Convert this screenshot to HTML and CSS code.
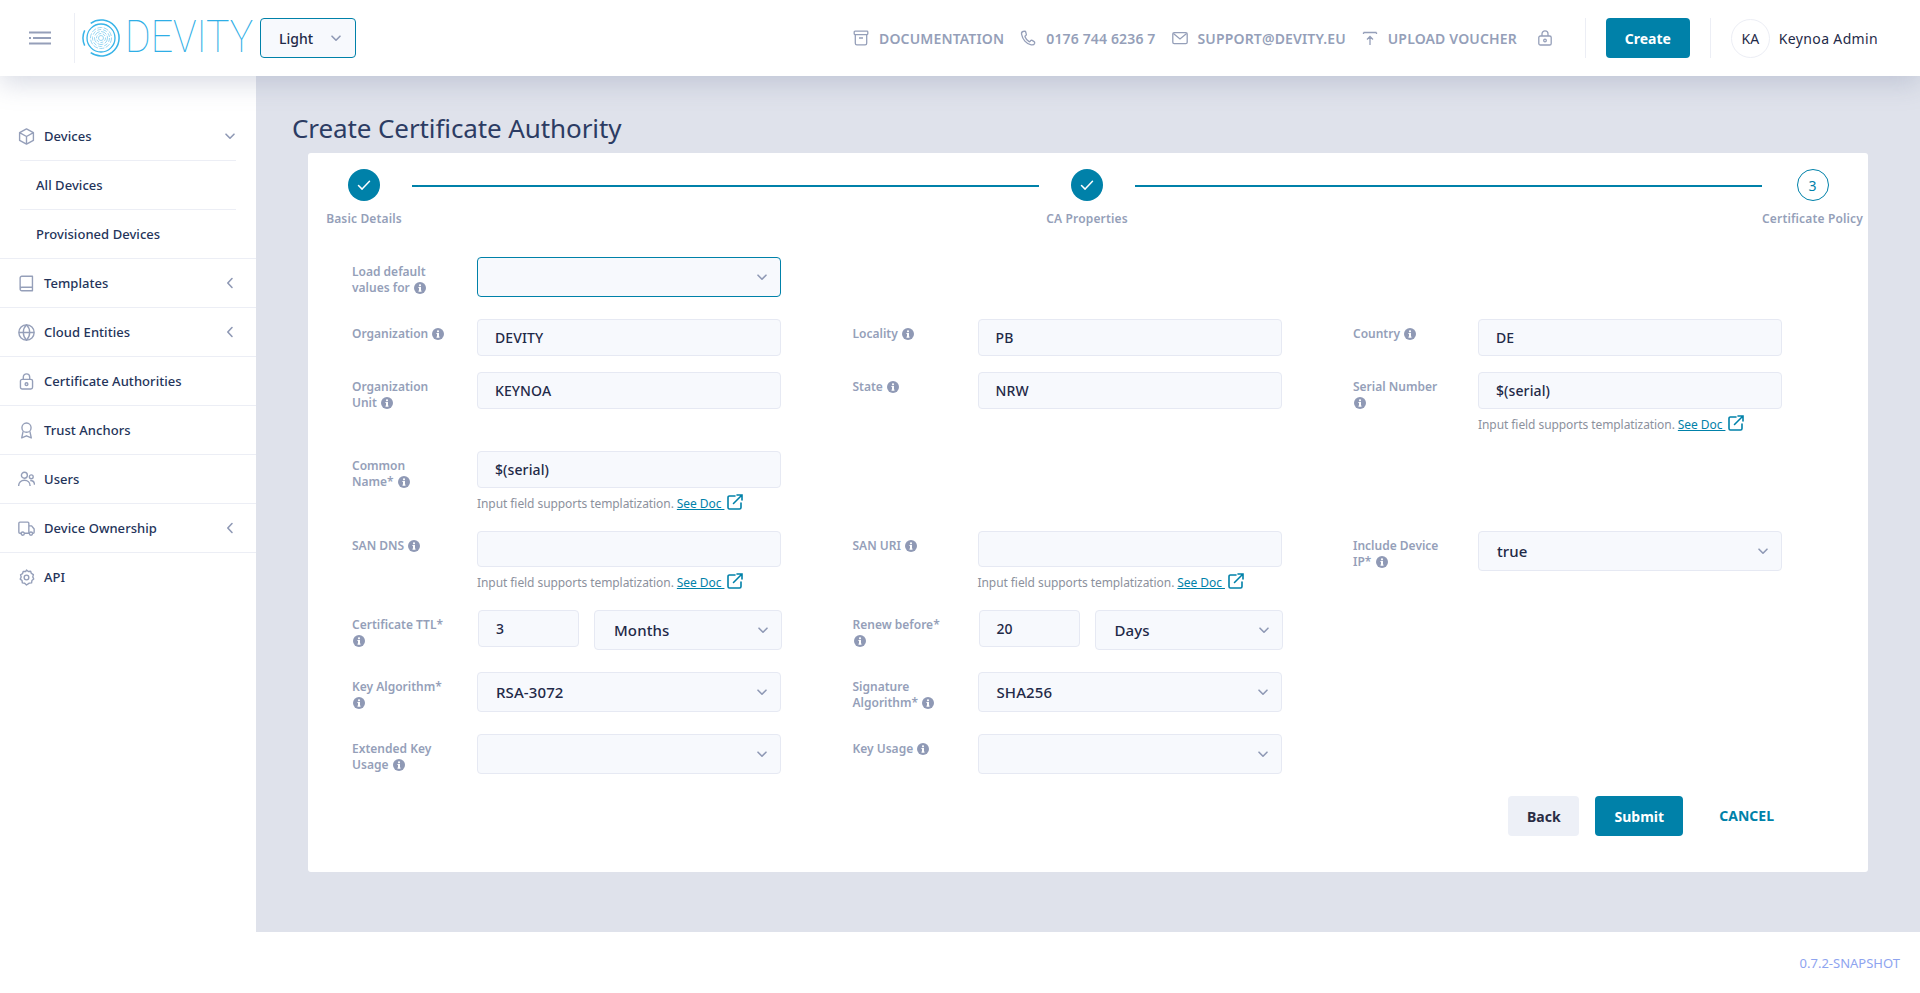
FILE: index.html
```html
<!DOCTYPE html>
<html lang="en">
<head>
<meta charset="utf-8">
<title>Create Certificate Authority</title>
<link rel="stylesheet" href="styles.css">
</head>
<body>
<svg class="defs" aria-hidden="true">
  <symbol id="i-info" viewBox="0 0 12 12"><circle cx="6" cy="6" r="6" fill="#8f99b5"/><rect x="5" y="5" width="2" height="4.4" fill="#fff"/><rect x="4.4" y="5" width="2" height="1" fill="#fff"/><rect x="4.4" y="8.6" width="3.2" height="1" fill="#fff"/><circle cx="6" cy="3.3" r="1.1" fill="#fff"/></symbol>
  <symbol id="i-chev" viewBox="0 0 12 12"><path d="M2 4.200l4 4 4-4" fill="none" stroke="#8f99b5" stroke-width="1.600" stroke-linecap="round" stroke-linejoin="round"/></symbol>
  <symbol id="i-left" viewBox="0 0 12 12"><path d="M8 1.500L3.800 6 8 10.500" fill="none" stroke="#8f99b5" stroke-width="1.600" stroke-linecap="round" stroke-linejoin="round"/></symbol>
  <symbol id="i-check" viewBox="0 0 16 16"><path d="M2.500 8.500l3.600 3.600 7.400-7.800" fill="none" stroke="#fff" stroke-width="1.500" stroke-linecap="round" stroke-linejoin="round"/></symbol>
  <symbol id="i-ext" viewBox="0 0 16 16"><path d="M8 2H2.400C1.600 2 1 2.600 1 3.400v10.200c0 .8.600 1.400 1.400 1.400h10.200c.8 0 1.400-.6 1.400-1.400V9" fill="none" stroke="#0081a9" stroke-width="1.600" stroke-linecap="round"/><path d="M6.500 9.500L14.500 1.500M10 1h5v5" fill="none" stroke="#0081a9" stroke-width="1.600" stroke-linecap="round"/></symbol>
</svg>

<header class="topbar">
  <svg class="burger" viewBox="0 0 22 14"><path d="M0 1.500h22M4 7h18M0 12.500h22M0 7h2" fill="none" stroke="#959fb9" stroke-width="2"/></svg>
  <span class="vrule vrule-logo"></span>
  <div class="logo">
    <svg class="logo-mark" viewBox="0 0 38 38" fill="none" stroke="#38b4e8">
      <path d="M8.700 4.300A18 18 0 1 1 8.700 33.700" stroke-width="1.500"/>
      <path d="M2.700 11.400A18 18 0 0 0 2.700 26.600" stroke-width="1.500"/>
      <circle cx="19" cy="19" r="14" stroke-width="1.300"/>
      <g stroke-width=".9" stroke="#8fd3f0">
        <circle cx="19" cy="19" r="10.500" stroke-dasharray="5 1.500"/>
        <circle cx="19" cy="19" r="8.500" stroke-dasharray="4 2"/>
        <circle cx="19" cy="19" r="6.500" stroke-dasharray="6 1.500"/>
        <circle cx="19" cy="19" r="4.500" stroke-dasharray="3 1.500"/>
        <circle cx="19" cy="19" r="2.500"/>
      </g>
    </svg>
    <span class="logo-text">DEVITY</span>
  </div>
  <div class="theme-select"><span>Light</span><svg class="chev"><use href="#i-chev"/></svg></div>

  <nav class="toplinks">
    <a class="toplink"><svg class="ticon" viewBox="0 0 16 16" fill="none"><rect x="1.200" y="1.200" width="13.600" height="3.400" rx=".8"/><path d="M2.300 4.600v8.600c0 .9.700 1.600 1.600 1.600h8.200c.9 0 1.600-.7 1.600-1.600V4.600M6 8h4"/></svg>DOCUMENTATION</a>
    <a class="toplink"><svg class="ticon" viewBox="0 0 16 16" fill="none"><path d="M5 1.200L3 1.500C1.800 1.800 1.300 3 1.600 4.400c.9 4.800 4.600 9.600 9.600 10.400 1.300.2 2.900-.2 3.400-1.400.3-.8.1-1.400-.5-1.800l-1.900-1.200c-.6-.3-1.200-.2-1.600.3l-.6.8c-.3.3-.6.3-.9.2C7 10.600 5.700 8.600 5 6.800c-.1-.4 0-.7.3-.9l.7-.6c.4-.3.500-.8.300-1.300L5.600 1.800C5.500 1.400 5.300 1.200 5 1.200z"/></svg>0176 744 6236 7</a>
    <a class="toplink"><svg class="ticon" viewBox="0 0 16 16" fill="none"><rect x=".8" y="2.600" width="14.400" height="11" rx="1.400"/><path d="M1.400 3.600L8 9l6.600-5.400"/></svg>SUPPORT@DEVITY.EU</a>
    <a class="toplink"><svg class="ticon" viewBox="0 0 16 16" fill="none"><path d="M1.500 2.500h13M1.500 2.500v1.500M14.500 2.500v1.500M8 6.500v8.500M5 9.500l3-3 3 3"/></svg>UPLOAD VOUCHER</a>
    <svg class="ticon ticon-lock" viewBox="0 0 16 16" fill="none"><rect x="1.800" y="6" width="12.400" height="9" rx="1.600"/><path d="M5 6V3.800a3 3 0 0 1 6 0V6"/><circle cx="8" cy="10.500" r="1.300"/></svg>
  </nav>
  <span class="vrule vrule-a"></span>
  <button class="btn btn-primary btn-create">Create</button>
  <span class="vrule vrule-b"></span>
  <div class="avatar">KA</div>
  <span class="username">Keynoa Admin</span>
</header>

<div class="body-row">
  <aside class="sidebar">
    <div class="nav-item nav-item-inset"><svg class="nav-icon" viewBox="0 0 16 16" fill="none"><path d="M8 .8l6.500 3.500v7.400L8 15.200 1.500 11.700V4.300zM1.500 4.300L8 8l6.500-3.700M8 8v7.200"/></svg><span>Devices</span><svg class="nav-chev"><use href="#i-chev"/></svg></div>
    <div class="nav-item nav-sub nav-item-inset"><span>All Devices</span></div>
    <div class="nav-item nav-sub"><span>Provisioned Devices</span></div>
    <div class="nav-item"><svg class="nav-icon" viewBox="0 0 16 16" fill="none"><path d="M2 13V2.800C2 1.800 2.800 1.200 3.600 1.200h10v13.600H3.600C2.700 14.800 2 14.100 2 13.200s.7-1.700 1.600-1.700h10"/></svg><span>Templates</span><svg class="nav-chev"><use href="#i-left"/></svg></div>
    <div class="nav-item"><svg class="nav-icon" viewBox="0 0 16 16" fill="none"><circle cx="8" cy="8" r="7.200"/><path d="M.8 8h14.400M8 .8c2 2 3 4.500 3 7.200s-1 5.200-3 7.200c-2-2-3-4.500-3-7.200S6 2.800 8 .8z"/></svg><span>Cloud Entities</span><svg class="nav-chev"><use href="#i-left"/></svg></div>
    <div class="nav-item"><svg class="nav-icon" viewBox="0 0 16 16" fill="none"><rect x="2.300" y="6" width="11.400" height="9" rx="1.600"/><path d="M5 6V3.800a3 3 0 0 1 6 0V6"/><circle cx="8" cy="10.500" r="1.300"/></svg><span>Certificate Authorities</span></div>
    <div class="nav-item"><svg class="nav-icon" viewBox="0 0 16 16" fill="none"><circle cx="8" cy="5.300" r="4.300"/><path d="M4.800 8.800L3.500 15 8 13l4.500 2-1.300-6.200"/></svg><span>Trust Anchors</span></div>
    <div class="nav-item"><svg class="nav-icon" viewBox="0 0 16 16" fill="none"><circle cx="6" cy="4" r="2.800"/><circle cx="12.500" cy="5.500" r="1.800"/><path d="M.6 14c0-3.300 2.400-5.300 5.400-5.300s5.400 2 5.400 5.300M11.500 9c2.200 0 4 1.500 4 4"/></svg><span>Users</span></div>
    <div class="nav-item"><svg class="nav-icon" viewBox="0 0 16 16" fill="none"><path d="M3 12.500H1.800c-.6 0-1-.4-1-1V3c0-.6.4-1 1-1h7.400c.6 0 1 .4 1 1v9.500H6M10.200 5.500h2.600l2.400 3v3c0 .6-.4 1-1 1h-.7M10.200 12.500h.6"/><circle cx="4.500" cy="12.800" r="1.500"/><circle cx="12.200" cy="12.800" r="1.500"/></svg><span>Device Ownership</span><svg class="nav-chev"><use href="#i-left"/></svg></div>
    <div class="nav-item nav-last"><svg class="nav-icon" viewBox="0 0 16 16" fill="none"><path d="M8 .9l1.700 1.400 2.200-.2.700 2.100 1.900 1.100-.6 2.100.9 2-1.700 1.400-.3 2.200-2.200.3L8 15.100l-1.700-1.700-2.200-.3-.3-2.200L2.100 9.500l.9-2-.6-2.100 1.900-1.100.7-2.100 2.200.2z"/><circle cx="8" cy="8" r="2.200"/></svg><span>API</span></div>
  </aside>

  <main class="content">
    <h1 class="page-title">Create Certificate Authority</h1>
    <section class="card">
      <div class="stepper">
        <div class="step"><span class="step-dot step-done"><svg class="check"><use href="#i-check"/></svg></span><span class="step-label">Basic Details</span></div>
        <span class="step-line"></span>
        <div class="step"><span class="step-dot step-done"><svg class="check"><use href="#i-check"/></svg></span><span class="step-label">CA Properties</span></div>
        <span class="step-line"></span>
        <div class="step"><span class="step-dot step-open">3</span><span class="step-label">Certificate Policy</span></div>
      </div>

      <form class="form">
        <div class="row row-load">
          <div class="field"><div class="flabel">Load default<br>values for <svg class="info"><use href="#i-info"/></svg></div><div class="fctl"><div class="select select-focus"><svg class="chev"><use href="#i-chev"/></svg></div></div></div>
        </div>
        <div class="row row-16">
          <div class="field"><div class="flabel">Organization <svg class="info"><use href="#i-info"/></svg></div><div class="fctl"><div class="input">DEVITY</div></div></div>
          <div class="field"><div class="flabel">Locality <svg class="info"><use href="#i-info"/></svg></div><div class="fctl"><div class="input">PB</div></div></div>
          <div class="field"><div class="flabel">Country <svg class="info"><use href="#i-info"/></svg></div><div class="fctl"><div class="input">DE</div></div></div>
        </div>
        <div class="row row-hint">
          <div class="field"><div class="flabel">Organization<br>Unit <svg class="info"><use href="#i-info"/></svg></div><div class="fctl"><div class="input">KEYNOA</div></div></div>
          <div class="field"><div class="flabel">State <svg class="info"><use href="#i-info"/></svg></div><div class="fctl"><div class="input">NRW</div></div></div>
          <div class="field"><div class="flabel">Serial Number<br><svg class="info"><use href="#i-info"/></svg></div><div class="fctl"><div class="input">$(serial)</div><p class="hint">Input field supports templatization. <a class="doc">See Doc </a><svg class="ext"><use href="#i-ext"/></svg></p></div></div>
        </div>
        <div class="row row-hint-b">
          <div class="field"><div class="flabel">Common<br>Name* <svg class="info"><use href="#i-info"/></svg></div><div class="fctl"><div class="input">$(serial)</div><p class="hint">Input field supports templatization. <a class="doc">See Doc </a><svg class="ext"><use href="#i-ext"/></svg></p></div></div>
        </div>
        <div class="row row-hint-b">
          <div class="field"><div class="flabel">SAN DNS <svg class="info"><use href="#i-info"/></svg></div><div class="fctl"><div class="input input-empty"></div><p class="hint">Input field supports templatization. <a class="doc">See Doc </a><svg class="ext"><use href="#i-ext"/></svg></p></div></div>
          <div class="field"><div class="flabel">SAN URI <svg class="info"><use href="#i-info"/></svg></div><div class="fctl"><div class="input input-empty"></div><p class="hint">Input field supports templatization. <a class="doc">See Doc </a><svg class="ext"><use href="#i-ext"/></svg></p></div></div>
          <div class="field"><div class="flabel">Include Device<br>IP* <svg class="info"><use href="#i-info"/></svg></div><div class="fctl"><div class="select"><span>true</span><svg class="chev"><use href="#i-chev"/></svg></div></div></div>
        </div>
        <div class="row">
          <div class="field"><div class="flabel">Certificate TTL*<br><svg class="info"><use href="#i-info"/></svg></div><div class="fctl fctl-pair"><div class="input input-num">3</div><div class="select select-unit"><span>Months</span><svg class="chev"><use href="#i-chev"/></svg></div></div></div>
          <div class="field"><div class="flabel">Renew before*<br><svg class="info"><use href="#i-info"/></svg></div><div class="fctl fctl-pair"><div class="input input-num">20</div><div class="select select-unit"><span>Days</span><svg class="chev"><use href="#i-chev"/></svg></div></div></div>
        </div>
        <div class="row">
          <div class="field"><div class="flabel">Key Algorithm*<br><svg class="info"><use href="#i-info"/></svg></div><div class="fctl"><div class="select"><span>RSA-3072</span><svg class="chev"><use href="#i-chev"/></svg></div></div></div>
          <div class="field"><div class="flabel">Signature<br>Algorithm* <svg class="info"><use href="#i-info"/></svg></div><div class="fctl"><div class="select"><span>SHA256</span><svg class="chev"><use href="#i-chev"/></svg></div></div></div>
        </div>
        <div class="row">
          <div class="field"><div class="flabel">Extended Key<br>Usage <svg class="info"><use href="#i-info"/></svg></div><div class="fctl"><div class="select"><svg class="chev"><use href="#i-chev"/></svg></div></div></div>
          <div class="field"><div class="flabel">Key Usage <svg class="info"><use href="#i-info"/></svg></div><div class="fctl"><div class="select"><svg class="chev"><use href="#i-chev"/></svg></div></div></div>
        </div>
        <div class="actions">
          <button type="button" class="btn btn-back">Back</button>
          <button type="button" class="btn btn-primary btn-submit">Submit</button>
          <button type="button" class="btn btn-cancel">CANCEL</button>
        </div>
      </form>
    </section>
  </main>
</div>

<footer class="footer">0.7.2-SNAPSHOT</footer>
</body>
</html>
```
FILE: styles.css
```css
* { box-sizing: border-box; }
html, body { margin: 0; height: 100%; }
body {
  height: 993px;
  overflow: hidden;
  display: flex;
  flex-direction: column;
  font-family: "Noto Sans", "Open Sans", sans-serif;
  color: #1f2a48;
  background: #fff;
}
.defs { display: none; }

/* top bar */
.topbar {
  position: relative;
  z-index: 2;
  flex: 0 0 76px;
  display: flex;
  align-items: center;
  background: #fff;
  box-shadow: 0 8px 26px rgba(120, 130, 160, .28);
  padding-left: 29px;
}
.burger { width: 22px; height: 14px; flex: none; }
.vrule { width: 1px; background: #eceef5; flex: none; }
.vrule-logo { height: 50px; margin-left: 23px; }
.vrule-a { height: 40px; margin-left: 32px; }
.vrule-b { height: 40px; margin-left: 20px; }
.logo { display: flex; align-items: center; width: 178px; margin-left: 7px; }
.logo-mark { width: 38px; height: 38px; flex: none; }
.logo-text {
  font-family: "Roboto", sans-serif;
  font-weight: 100;
  font-size: 43.6px;
  line-height: 1;
  color: #2eaee6;
  margin-left: 5px;
  white-space: nowrap;
  transform: scaleX(.9);
  transform-origin: left center;
}
.theme-select {
  width: 96px;
  height: 40px;
  display: flex;
  align-items: center;
  justify-content: space-between;
  padding: 0 13px 0 18px;
  border: 1px solid #0081a9;
  border-radius: 4px;
  background: #f7f9fd;
  font-size: 14px;
  font-weight: 500;
}
.chev { width: 12px; height: 12px; flex: none; }
.toplinks { display: flex; align-items: center; margin-left: auto; }
.toplink {
  display: flex;
  align-items: center;
  gap: 10px;
  font-size: 14px;
  font-weight: 600;
  letter-spacing: .15px;
  color: #959fb9;
  margin-left: 16px;
}
.ticon { width: 16px; height: 16px; flex: none; stroke: #959fb9; stroke-width: 1.3; }
.ticon-lock { margin-left: 20px; }
.btn {
  height: 40px;
  border: 0;
  border-radius: 4px;
  font-family: inherit;
  font-size: 14px;
  font-weight: 700;
}
.btn-primary { background: #0081a9; color: #fff; }
.btn-create { width: 84px; margin-left: 20px; }
.avatar {
  width: 39px;
  height: 39px;
  margin-left: 20px;
  border: 1px solid #eceef5;
  border-radius: 50%;
  display: flex;
  align-items: center;
  justify-content: center;
  font-size: 14px;
}
.username { font-size: 14px; letter-spacing: .35px; margin-left: 9px; margin-right: 42px; }

/* body */
.body-row { flex: 0 0 856px; display: flex; min-height: 0; }
.sidebar { flex: 0 0 256px; background: #fff; padding-top: 36px; }
.nav-item {
  position: relative;
  height: 49px;
  display: flex;
  align-items: center;
  padding: 0 20px 0 18px;
  border-bottom: 1px solid #eceef5;
  font-size: 13px;
  font-weight: 500;
  letter-spacing: .05px;
  color: #24345a;
}
.nav-item-inset { border-bottom: 0; padding-bottom: 1px; }
.nav-item-inset::after {
  content: "";
  position: absolute;
  left: 20px;
  right: 20px;
  bottom: 0;
  height: 1px;
  background: #eceef5;
}
.nav-last { border-bottom: 0; padding-bottom: 1px; }
.nav-sub { padding-left: 36px; }
.nav-icon { width: 17px; height: 17px; flex: none; margin: 0 9px 0 0; stroke: #959fb9; stroke-width: 1.3; stroke-linejoin: round; }
.nav-chev { width: 12px; height: 12px; margin-left: auto; flex: none; }

.content { flex: 1; background: #dfe2eb; padding: 0 52px 60px 52px; min-width: 0; }
.page-title {
  margin: 0 0 0 -16px;
  padding-top: 37px;
  height: 77px;
  font-size: 26px;
  font-weight: 400;
  letter-spacing: -.1px;
  line-height: 30px;
  color: #2c3c63;
}
.card { height: 719px; background: #fff; border-radius: 3px; }

/* stepper */
.stepper { display: flex; align-items: flex-start; padding: 16px 5px 0 8px; height: 104px; }
.step { flex: 0 0 96px; display: flex; flex-direction: column; align-items: center; }
.step-dot {
  width: 32px;
  height: 32px;
  border-radius: 50%;
  display: flex;
  align-items: center;
  justify-content: center;
  font-size: 14px;
}
.step-done { background: #0081a9; }
.step-open { border: 1px solid #0081a9; color: #0081a9; }
.check { width: 16px; height: 16px; }
.step-label {
  margin-top: 10px;
  font-size: 12px;
  line-height: 16px;
  font-weight: 600;
  letter-spacing: .15px;
  color: #959fb9;
  white-space: nowrap;
}
.step-line { flex: 1; height: 2px; margin-top: 16px; background: #0081a9; }

/* form */
.form { padding-left: 44px; }
.row {
  display: grid;
  grid-template-columns: repeat(3, 500.5px);
  align-items: start;
  margin-bottom: 22px;
}
.row-load { margin-bottom: 22px; }
.row-16 { margin-bottom: 16px; }
.row-hint { margin-bottom: 20px; }
.row-hint-b { margin-bottom: 21px; }
.field { display: flex; align-items: flex-start; }
.flabel {
  flex: 0 0 125px;
  padding-top: 7px;
  font-size: 12px;
  line-height: 16px;
  font-weight: 600;
  color: #959fb9;
}
.info { width: 12px; height: 12px; vertical-align: -1.5px; margin-left: 1px; }
.fctl { width: 304px; flex: none; }
.fctl-pair { display: flex; gap: 15px; width: 305px; }
.input, .select {
  display: flex;
  align-items: center;
  background: #f7f9fd;
  border: 1px solid #e6e9f3;
  border-radius: 4px;
  font-size: 14px;
  font-weight: 500;
  letter-spacing: .1px;
  color: #1f2a48;
}
.input { height: 37px; padding-left: 17px; }
.input-empty { height: 36px; }
.input-num { width: 101px; flex: none; margin-left: 1px; }
.select { height: 40px; padding: 0 12px 0 18px; justify-content: space-between; font-size: 15px; }
.select-unit { flex: 1; padding-left: 19px; }
.select > .chev:only-child { margin-left: auto; }
.select-focus { border-color: #0081a9; }
.hint {
  margin: 6px 0 0;
  height: 16px;
  font-size: 12px;
  line-height: 16px;
  letter-spacing: -.07px;
  color: #8c919d;
  white-space: nowrap;
}
.doc { color: #0081a9; text-decoration: underline; }
.ext { width: 16px; height: 16px; vertical-align: -2px; margin-left: 3px; }

.actions { display: flex; align-items: center; justify-content: flex-end; gap: 16px; padding-right: 94px; }
.actions .btn { padding-bottom: 1px; }
.btn-back { width: 71px; background: #edf0f7; color: #2a2c44; }
.btn-submit { width: 88px; }
.btn-cancel { background: none; color: #0081a9; padding: 0 0 0 20px; }

.footer {
  flex: 1;
  background: #fff;
  font-size: 13px;
  line-height: 62px;
  text-align: right;
  padding-right: 20px;
  color: #8ea4ef;
}
```
